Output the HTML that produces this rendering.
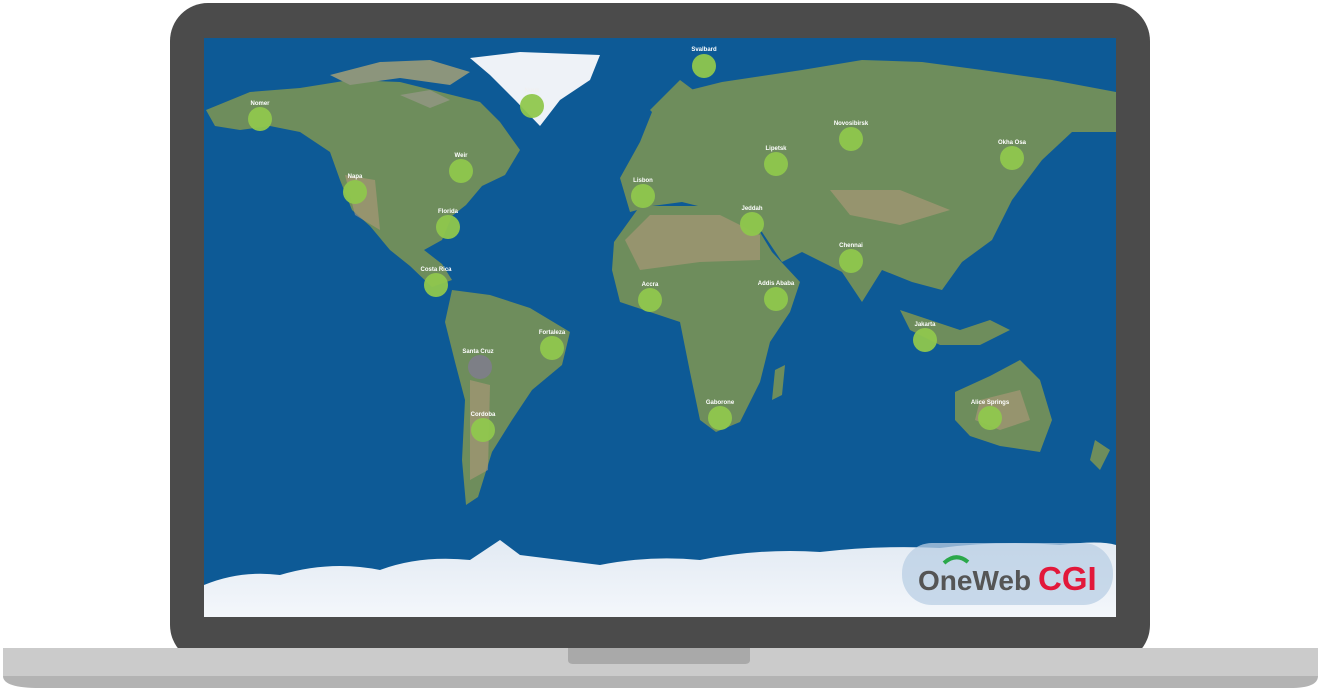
<!DOCTYPE html>
<html><head><meta charset="utf-8"><style>
html,body{margin:0;padding:0;width:1321px;height:691px;background:#fff;overflow:hidden}
svg{display:block}
</style></head><body>
<svg width="1321" height="691" viewBox="0 0 1321 691" xmlns="http://www.w3.org/2000/svg" font-family="Liberation Sans, sans-serif">
<defs>
<clipPath id="scr"><rect x="204" y="38" width="912" height="579"/></clipPath>
<linearGradient id="ant" x1="0" y1="0" x2="0" y2="1"><stop offset="0" stop-color="#e2eaf3"/><stop offset="1" stop-color="#f4f7fb"/></linearGradient>
</defs>
<rect x="170" y="3" width="980" height="660" rx="38" fill="#4b4b4b"/>
<path d="M3 648 H1318 V676 Q1318 688 1290 688 H40 Q3 688 3 676 Z" fill="#b3b3b3"/>
<rect x="3" y="648" width="1315" height="28" fill="#cbcbcb"/>
<path d="M568 648 H750 V660 Q750 664 744 664 H574 Q568 664 568 660 Z" fill="#a9a9a9"/>
<g clip-path="url(#scr)">
<rect x="204" y="38" width="912" height="579" fill="#0d5a96"/>
<g fill="#6e8d5c">
<path d="M206 110 L250 92 L300 88 L350 80 L400 82 L440 92 L480 102 L500 122 L520 150 L505 175 L482 186 L466 205 L452 216 L442 240 L424 250 L442 264 L452 280 L432 287 L410 266 L390 250 L370 226 L352 210 L340 180 L330 152 L300 132 L270 126 L240 130 L215 126 Z"/>
<path d="M330 75 L380 62 L430 60 L470 72 L450 85 L400 78 L350 85 Z" fill="#8c957c"/>
<path d="M400 95 L430 90 L450 100 L430 108 Z" fill="#8c957c"/>
<path d="M452 290 L490 295 L530 308 L570 332 L562 365 L532 390 L512 420 L492 452 L478 497 L466 505 L462 460 L465 400 L455 362 L445 322 Z"/>
<path d="M620 178 L640 142 L652 112 L682 92 L722 82 L762 76 L802 70 L862 60 L922 62 L982 70 L1052 80 L1116 92 L1116 132 L1072 132 L1042 160 L1012 200 L992 240 L962 262 L942 290 L912 282 L882 270 L862 302 L842 272 L802 252 L782 262 L762 232 L722 212 L682 202 L652 206 L630 212 Z"/>
<path d="M650 110 L680 80 L700 95 L690 120 L665 125 Z"/>
<path d="M614 242 L640 206 L700 206 L750 216 L772 252 L800 282 L790 312 L770 342 L760 382 L740 422 L716 432 L700 420 L690 372 L680 322 L650 312 L620 302 L612 270 Z"/>
<path d="M955 392 L990 376 L1020 360 L1040 380 L1052 420 L1040 452 L1000 446 L970 436 L955 420 Z"/>
<path d="M900 310 L930 320 L960 330 L990 320 L1010 330 L980 345 L940 345 L910 330 Z"/>
<path d="M1095 440 L1110 450 L1100 470 L1090 460 Z"/>
<path d="M775 370 L785 365 L782 395 L772 400 Z"/>
</g>
<g fill="#b09a7a" opacity="0.6">
<path d="M625 240 L650 215 L720 215 L760 235 L760 260 L700 262 L640 270 Z"/>
<path d="M980 400 L1020 390 L1030 420 L1000 430 L975 420 Z"/>
<path d="M830 190 L900 190 L950 210 L900 225 L850 215 Z"/>
<path d="M345 175 L375 180 L380 230 L355 215 Z"/>
<path d="M470 380 L490 385 L488 470 L470 480 Z"/>
</g>
<path d="M470 58 L520 52 L600 55 L590 80 L560 100 L540 126 L515 100 L490 75 Z" fill="#eef2f7"/>
<path d="M204 585 Q240 570 280 575 Q330 560 380 570 Q420 555 470 560 L500 540 L520 555 Q560 560 600 565 Q650 555 700 560 Q760 548 820 552 Q880 545 940 548 Q1000 540 1060 545 Q1100 540 1116 545 V617 H204 Z" fill="url(#ant)"/>
<rect x="902" y="543" width="211" height="62" rx="30" fill="#b9cfe4" opacity="0.75"/>
<text x="918" y="590" font-size="28" font-weight="bold" fill="#555">OneWeb</text>
<text x="1038" y="590" font-size="33" font-weight="bold" fill="#e2183a">CGI</text>
<path d="M944 563 Q956 552 968 562" stroke="#2aa84a" stroke-width="4" fill="none"/>
<g fill="#8fc74d" opacity="0.95">
<circle cx="260" cy="119" r="12"/><circle cx="704" cy="66" r="12"/><circle cx="532" cy="106" r="12"/>
<circle cx="461" cy="171" r="12"/><circle cx="355" cy="192" r="12"/><circle cx="448" cy="227" r="12"/>
<circle cx="643" cy="196" r="12"/><circle cx="776" cy="164" r="12"/><circle cx="851" cy="139" r="12"/>
<circle cx="1012" cy="158" r="12"/><circle cx="752" cy="224" r="12"/><circle cx="851" cy="261" r="12"/>
<circle cx="436" cy="285" r="12"/><circle cx="650" cy="300" r="12"/><circle cx="776" cy="299" r="12"/>
<circle cx="925" cy="340" r="12"/><circle cx="552" cy="348" r="12"/><circle cx="720" cy="418" r="12"/>
<circle cx="990" cy="418" r="12"/><circle cx="483" cy="430" r="12"/>
</g>
<circle cx="480" cy="367" r="12" fill="#7d7f86"/>
<g fill="#fff" font-size="6" font-weight="bold" text-anchor="middle">
<text x="260" y="105">Nomer</text><text x="704" y="51">Svalbard</text><text x="532" y="92" fill="#f0f0f0">Nuuk</text>
<text x="461" y="157">Weir</text><text x="355" y="178">Napa</text><text x="448" y="213">Florida</text>
<text x="643" y="182">Lisbon</text><text x="776" y="150">Lipetsk</text><text x="851" y="125">Novosibirsk</text>
<text x="1012" y="144">Okha Osa</text><text x="752" y="210">Jeddah</text><text x="851" y="247">Chennai</text>
<text x="436" y="271">Costa Rica</text><text x="650" y="286">Accra</text><text x="776" y="285">Addis Ababa</text>
<text x="925" y="326">Jakarta</text><text x="552" y="334">Fortaleza</text><text x="478" y="353">Santa Cruz</text>
<text x="720" y="404">Gaborone</text><text x="990" y="404">Alice Springs</text><text x="483" y="416">Cordoba</text>
</g>
</g>
</svg>
</body></html>
